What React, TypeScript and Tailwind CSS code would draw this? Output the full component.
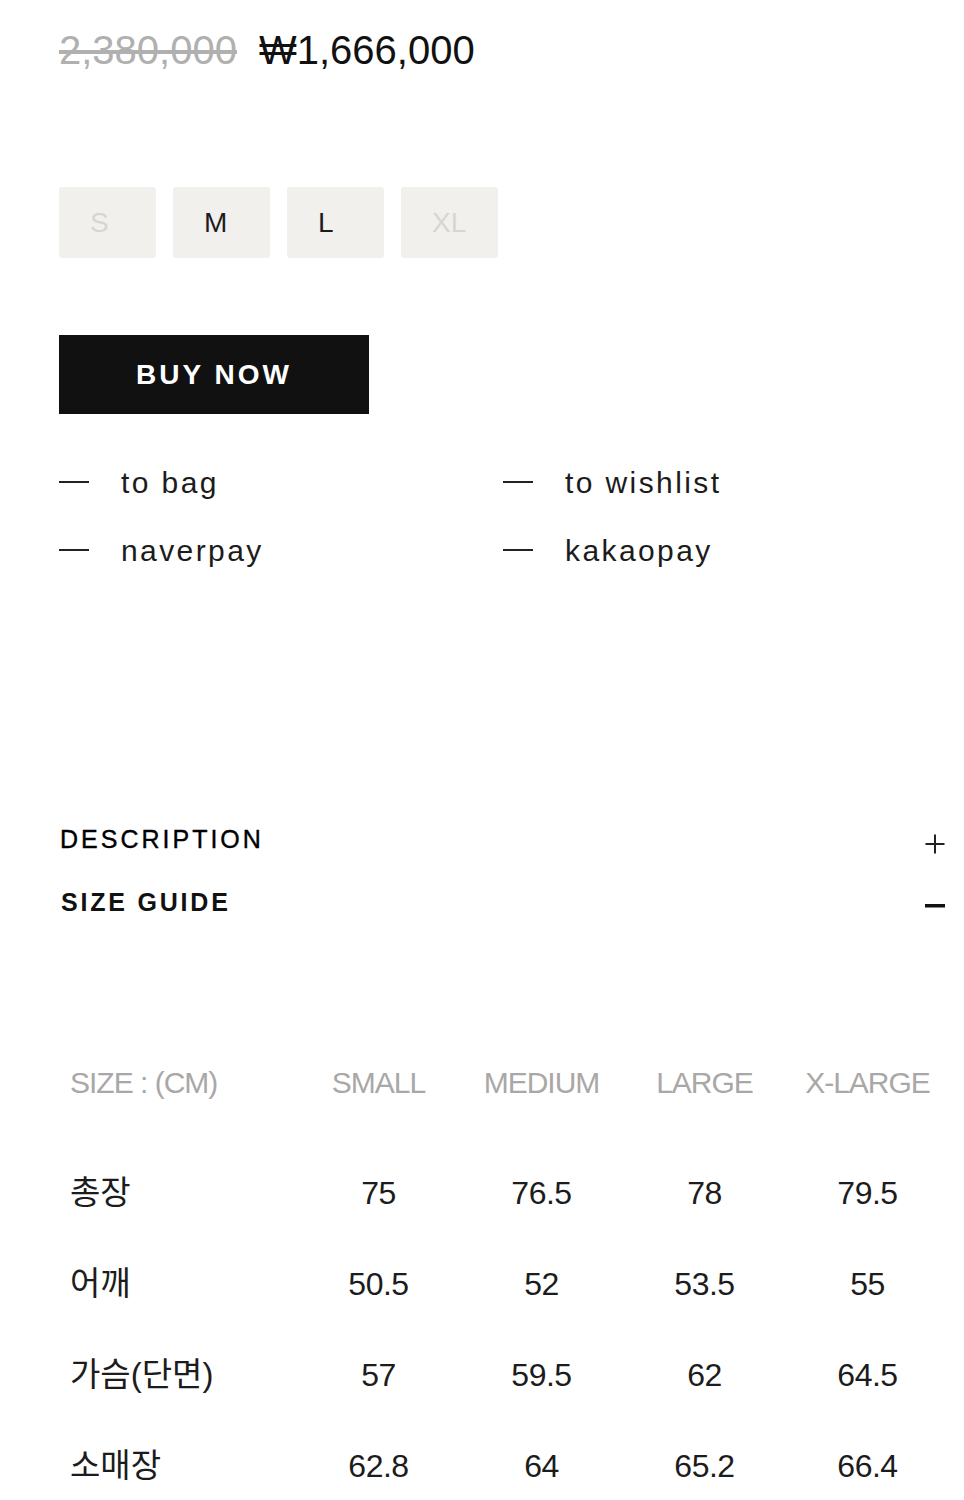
const SIZES: { label: string; soldOut: boolean }[] = [
  { label: "S",  soldOut: true  },
  { label: "M",  soldOut: false },
  { label: "L",  soldOut: false },
  { label: "XL", soldOut: true  },
];

const ACTIONS = ["to bag", "to wishlist", "naverpay", "kakaopay"];

const COLUMNS = ["SMALL", "MEDIUM", "LARGE", "X-LARGE"];

const MEASURES: { label: string; values: string[] }[] = [
  { label: "총장",       values: ["75", "76.5", "78", "79.5"]   },
  { label: "어깨",       values: ["50.5", "52", "53.5", "55"]   },
  { label: "가슴(단면)", values: ["57", "59.5", "62", "64.5"]   },
  { label: "소매장",     values: ["62.8", "64", "65.2", "66.4"] },
];

export default function App() {
  return (
    <div className="min-h-[1500px] bg-white pl-[59px] pr-[19px] font-['Liberation_Sans','Noto_Sans_CJK_KR',sans-serif] text-[#111]">
      {/* Price */}
      <div className="mt-[30px] flex h-[40px] items-center gap-[22px] text-[40px] leading-[40px]">
        <span className="text-[#b0b0b0] line-through decoration-[#b0b0b0]">2,380,000</span>
        <span className="text-[#111]">₩1,666,000</span>
      </div>

      {/* Size picker */}
      <div className="mt-[117px] flex gap-[17px]">
        {SIZES.map((s) => (
          <button
            key={s.label}
            className={
              s.soldOut
                ? "flex h-[71px] w-[97px] items-center rounded-[3px] bg-[#f2f0ed] pl-[31px] text-[28px] text-[#d8d5d2]"
                : "flex h-[71px] w-[97px] items-center rounded-[3px] bg-[#f2f0ed] pl-[31px] text-[28px] text-[#1c1c1c]"
            }
          >
            {s.label}
          </button>
        ))}
      </div>

      {/* Buy now */}
      <button className="mt-[77px] flex h-[79px] w-[310px] items-center justify-center bg-[#111] text-[28px] font-semibold tracking-[3px] text-white">
        BUY NOW
      </button>

      {/* Secondary actions */}
      <div className="mt-[48px] grid grid-cols-[444px_1fr] gap-y-[28px]">
        {ACTIONS.map((a) => (
          <div key={a} className="flex h-[40px] items-center gap-[32px]">
            <span className="h-[2px] w-[30px] bg-[#222]" />
            <span className="text-[30px] tracking-[2.4px] text-[#1c1c1c]">{a}</span>
          </div>
        ))}
      </div>

      {/* Accordion */}
      <div className="mt-[250px] flex h-[40px] items-center justify-between pl-[1px]">
        <span className="text-[25px] tracking-[3px] text-black [-webkit-text-stroke:0.4px_black]">DESCRIPTION</span>
        <svg width="20" height="20" viewBox="0 0 20 20" className="mt-[8px]">
          <path d="M10 0.5V19.5M0.5 10H19.5" stroke="#222" strokeWidth="2" fill="none" />
        </svg>
      </div>
      <div className="mt-[23px] flex h-[40px] items-center justify-between pl-[2px]">
        <span className="text-[25px] font-semibold tracking-[2.8px] text-[#111]">SIZE GUIDE</span>
        <svg width="20" height="4" viewBox="0 0 20 4" className="mt-[6px]">
          <rect x="0" y="0" width="20" height="3.5" fill="#111" />
        </svg>
      </div>

      {/* Size table */}
      <div className="mt-[134px] pl-[11px]">
        <div className="grid h-[50px] grid-cols-[227px_163px_163px_163px_163px] items-center text-[30px] tracking-[-1px] text-[#aaa7a7]">
          <span>SIZE : (CM)</span>
          {COLUMNS.map((c) => (
            <span key={c} className="text-center">{c}</span>
          ))}
        </div>
        <div className="mt-[40px]">
          {MEASURES.map((m) => (
            <div
              key={m.label}
              className="grid h-[91px] grid-cols-[227px_163px_163px_163px_163px] items-center text-[32px] tracking-[-0.5px] text-[#1c1c1c]"
            >
              <span className="text-[33px] tracking-[0px]">{m.label}</span>
              {m.values.map((v, i) => (
                <span key={i} className="text-center">{v}</span>
              ))}
            </div>
          ))}
        </div>
      </div>
    </div>
  );
}
